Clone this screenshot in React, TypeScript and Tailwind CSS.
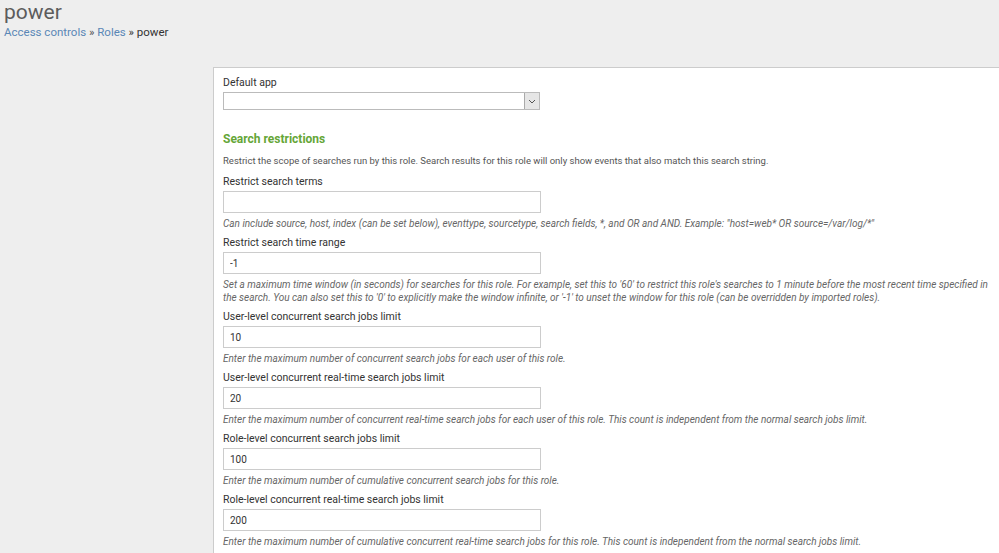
import type { ReactElement } from "react";

interface Field {
  readonly label: string;
  readonly value: string;
  readonly help: string;
}

const fields: Field[] = [
  {
    label: "Restrict search terms",
    value: "",
    help: "Can include source, host, index (can be set below), eventtype, sourcetype, search fields, *, and OR and AND. Example: \"host=web* OR source=/var/log/*\"",
  },
  {
    label: "Restrict search time range",
    value: "-1",
    help: "Set a maximum time window (in seconds) for searches for this role. For example, set this to '60' to restrict this role's searches to 1 minute before the most recent time specified in the search. You can also set this to '0' to explicitly make the window infinite, or '-1' to unset the window for this role (can be overridden by imported roles).",
  },
  {
    label: "User-level concurrent search jobs limit",
    value: "10",
    help: "Enter the maximum number of concurrent search jobs for each user of this role.",
  },
  {
    label: "User-level concurrent real-time search jobs limit",
    value: "20",
    help: "Enter the maximum number of concurrent real-time search jobs for each user of this role. This count is independent from the normal search jobs limit.",
  },
  {
    label: "Role-level concurrent search jobs limit",
    value: "100",
    help: "Enter the maximum number of cumulative concurrent search jobs for this role.",
  },
  {
    label: "Role-level concurrent real-time search jobs limit",
    value: "200",
    help: "Enter the maximum number of cumulative concurrent real-time search jobs for this role. This count is independent from the normal search jobs limit.",
  },
];

function FieldRow({ field }: { readonly field: Field }): ReactElement {
  return (
    <div className="mt-[5px]">
      <label className="block text-[10.5px] leading-[15px] text-[#333]">{field.label}</label>
      <input
        type="text"
        readOnly
        value={field.value}
        className="mt-[2px] block h-[22px] w-[318px] border border-[#ccc] bg-white px-[6px] text-[10px] text-[#333] outline-none"
      />
      <p className="mt-[4px] text-[10px] leading-[13px] italic text-[#666]">{field.help}</p>
    </div>
  );
}

export default function App(): ReactElement {
  return (
    <div className="min-h-[553px] bg-[#eeeeee] font-['Roboto',sans-serif] text-[#333]">
      {/* Page header — title + breadcrumb */}
      <div className="px-[4px]">
        <h1 className="text-[21px] leading-[24px] text-[#5c5c5c]">power</h1>
        <div className="mt-[1px] text-[11.5px] leading-[14px]">
          <a className="text-[#5a87b6]">Access controls</a>
          <span className="text-[#555]"> » </span>
          <a className="text-[#5a87b6]">Roles</a>
          <span className="text-[#333]"> » power</span>
        </div>
      </div>

      {/* Edit panel */}
      <div className="ml-[213px] mt-[28px] border-t border-l border-[#ccc] bg-white pl-[9px] pr-[4px] pt-[7px] pb-[10px]">
        <label className="block text-[10.5px] leading-[15px]">Default app</label>
        <div className="mt-[2px] flex h-[18px] w-[317px] items-stretch border border-[#bbb] bg-white">
          <div className="flex-1" />
          <div className="flex w-[15px] items-center justify-center border-l border-[#aaa] bg-[#e6e6e6]">
            <svg width="8" height="5" viewBox="0 0 8 5" fill="none">
              <path d="M1 1l3 3 3-3" stroke="#555" strokeWidth="1" />
            </svg>
          </div>
        </div>

        <h2 className="mt-[21px] text-[12px] font-bold leading-[16px] text-[#65a637]">Search restrictions</h2>
        <p className="mt-[8px] text-[9.5px] leading-[12px] text-[#555]">
          Restrict the scope of searches run by this role. Search results for this role will only show events that also match this search string.
        </p>

        <div className="pt-[2px]">
          {fields.map((field) => (
            <FieldRow key={field.label} field={field} />
          ))}
        </div>
      </div>
    </div>
  );
}
